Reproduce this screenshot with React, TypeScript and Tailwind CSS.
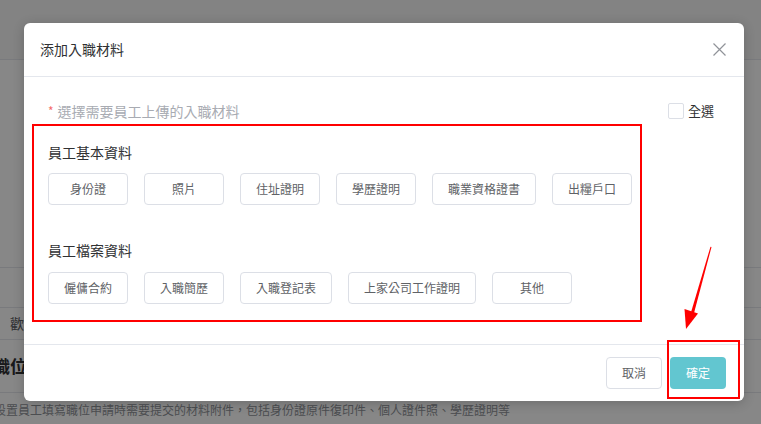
import React from "react";

const basic = [
  { t: "身份證", w: "w-[80px]" },
  { t: "照片", w: "w-[80px]" },
  { t: "住址證明", w: "w-[80px]" },
  { t: "學歷證明", w: "w-[80px]" },
  { t: "職業資格證書", w: "w-[104px]" },
  { t: "出糧戶口", w: "w-[80px]" },
];
const archive = [
  { t: "僱傭合約", w: "w-[80px]" },
  { t: "入職簡歷", w: "w-[80px]" },
  { t: "入職登記表", w: "w-[92px]" },
  { t: "上家公司工作證明", w: "w-[128px]" },
  { t: "其他", w: "w-[80px]" },
];

function Tag({ t, w }: { t: string; w: string }) {
  return (
    <div
      className={`${w} h-[32px] flex items-center justify-center rounded-[4px] border border-[#dcdfe6] text-[12px] text-[#606266]`}
    >
      {t}
    </div>
  );
}

export default function App() {
  return (
    <div
      className="relative w-[761px] h-[424px] overflow-hidden bg-white"
      style={{ fontFamily: '"Noto Sans CJK TC", "Noto Sans", sans-serif' }}
    >
      {/* background page */}
      <div className="flex flex-col w-full">
        <div className="h-[60px] border-b border-[#e4e7ed] bg-[#f7f7f7]" />
        <div className="h-[208px] border-b border-[#e4e7ed]" />
        <div className="h-[40px] border-b border-[#e4e7ed]" />
        <div className="h-[32px] border-b border-[#e4e7ed] flex items-center pl-[10px] text-[14px] text-[#606266]">
          歡迎使用
        </div>
        <div className="h-[53px] border-b border-[#e4e7ed] flex items-center ml-[-7px] text-[17px] font-bold text-[#303133] whitespace-nowrap">
          職位申請材料
        </div>
        <div className="pt-[8px] ml-[-6px] text-[12px] text-[#909399] whitespace-nowrap">
          設置員工填寫職位申請時需要提交的材料附件，包括身份證原件復印件、個人證件照、學歷證明等
        </div>
      </div>

      {/* overlay */}
      <div className="absolute inset-0 bg-black/[0.47]" />

      {/* modal */}
      <div className="absolute left-[24px] top-[23px] w-[720px] h-[378px] bg-white rounded-[6px] shadow-[0_2px_12px_rgba(0,0,0,0.2)] flex flex-col">
        <div className="h-[54px] border-b border-[#e4e7ed] flex items-center justify-between pl-[16px] pr-[18px]">
          <span className="text-[14px] text-[#303133]">添加入職材料</span>
          <svg width="13" height="13" viewBox="0 0 13 13" className="text-[#909399]">
            <path d="M0.5 0.5L12.5 12.5M12.5 0.5L0.5 12.5" stroke="currentColor" strokeWidth="1.2" />
          </svg>
        </div>
        <div className="flex-1 flex flex-col">
          <div className="mt-[24px] h-[20px] flex items-center justify-between pl-[24px] pr-[30px]">
            <div className="flex items-center text-[14px] text-[#a8abb2]">
              <span className="text-[#f56c6c] mr-[4px] text-[12px]">*</span>
              選擇需要員工上傳的入職材料
            </div>
            <div className="flex items-center gap-[4px] text-[13px] text-[#303133]">
              <span className="w-[16px] h-[16px] rounded-[2px] border border-[#dcdfe6] bg-white" />
              全選
            </div>
          </div>
          <div className="mt-[3px] ml-[8px] w-[610px] h-[198px] border-2 border-[#ff0000] pt-[16px] pl-[14px]">
            <div className="h-[20px] flex items-center text-[14px] text-[#303133]">員工基本資料</div>
            <div className="mt-[11px] flex gap-[16px]">
              {basic.map((b) => (
                <Tag key={b.t} {...b} />
              ))}
            </div>
            <div className="mt-[35px] h-[20px] flex items-center text-[14px] text-[#303133]">員工檔案資料</div>
            <div className="mt-[12px] flex gap-[16px]">
              {archive.map((b) => (
                <Tag key={b.t} {...b} />
              ))}
            </div>
          </div>
        </div>
        <div className="h-[57px] border-t border-[#e4e7ed] flex items-center justify-end gap-[8px] pr-[18px]">
          <div className="w-[56px] h-[32px] rounded-[4px] border border-[#dcdfe6] flex items-center justify-center text-[12px] text-[#606266]">
            取消
          </div>
          <div className="w-[56px] h-[32px] rounded-[4px] bg-[#62c6d0] flex items-center justify-center text-[12px] text-white">
            確定
          </div>
        </div>
      </div>

      {/* annotation box around confirm */}
      <div className="absolute left-[667px] top-[340px] w-[73px] h-[59px] border-2 border-[#ff0000]" />

      {/* annotation arrow */}
      <svg className="absolute left-0 top-0" width="761" height="424" viewBox="0 0 761 424">
        <polygon points="711.5,247 710.5,246.7 690.5,314 693.5,315" fill="#ff0000" />
        <polygon points="686,329 684.5,309 698,313.5" fill="#ff0000" />
      </svg>
    </div>
  );
}
